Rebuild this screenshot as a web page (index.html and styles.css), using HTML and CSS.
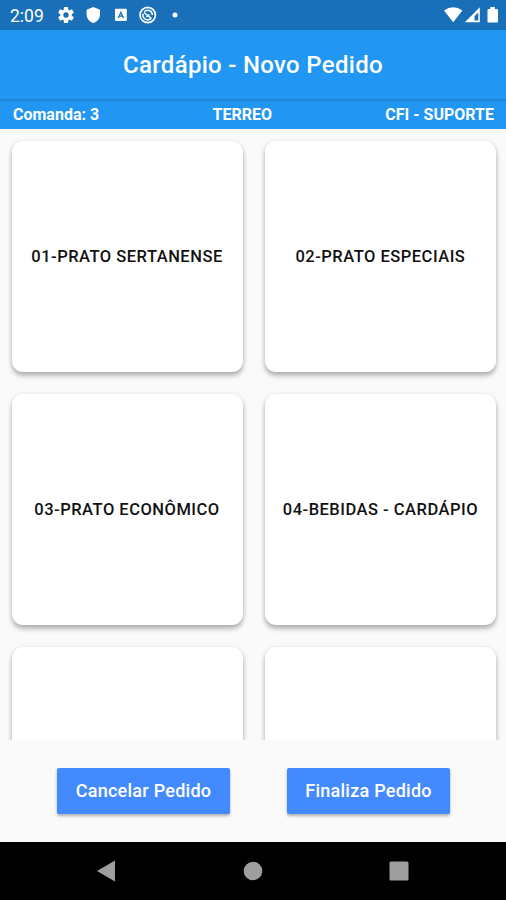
FILE: index.html
```html
<!DOCTYPE html>
<html lang="pt-BR">
<head>
  <meta charset="UTF-8">
  <meta name="viewport" content="width=device-width, initial-scale=1.0">
  <title>Cardápio - Novo Pedido</title>
  <link rel="stylesheet" href="styles.css">
</head>
<body>
  <div class="status-bar">
    <span class="clock">2:09</span>
    <svg class="notifications" width="130" height="20" viewBox="0 0 130 20" fill="#fff">
      <!-- gear -->
      <g transform="translate(10 10)">
        <rect x="-2.2" y="-8" width="4.4" height="16" rx="0.8"/>
        <rect x="-2.2" y="-8" width="4.4" height="16" rx="0.8" transform="rotate(60)"/>
        <rect x="-2.2" y="-8" width="4.4" height="16" rx="0.8" transform="rotate(120)"/>
        <circle r="5.8"/>
        <circle r="2.7" fill="#1a70b8"/>
      </g>
      <!-- shield -->
      <path d="M37.300 2 L44 4.700 V9.500 C44 13.500 41.300 16.700 37.300 18 C33.300 16.700 30.600 13.500 30.600 9.500 V4.700 Z"/>
      <!-- keyboard -->
      <rect x="59" y="3.700" width="11.800" height="12.400" rx="1"/>
      <path d="M62.300 13 L64.900 7.300 L67.500 13 M63.200 11.200 H66.600" fill="none" stroke="#1a70b8" stroke-width="1.300"/>
      <!-- sync circle -->
      <g fill="none" stroke="#fff">
        <circle cx="91.700" cy="10" r="7.700" stroke-width="1.700"/>
        <path d="M88.300 6.700 A4.700 4.700 0 0 1 96.400 10 M95 13.400 A4.700 4.700 0 0 1 87.200 8.700" stroke-width="1.500"/>
        <path d="M88 7.500 L95.500 13.500 M90.300 11.800 L93.500 9.500" stroke-width="1.500"/>
      </g>
      <circle cx="119" cy="10" r="2.500"/>
    </svg>
    <svg class="signals" width="58" height="20" viewBox="0 0 58 20" fill="#fff">
      <path d="M1 5.500 Q10.200 -1.200 19.400 5.500 L10.200 17.200 Z"/>
      <!-- mobile signal, right part hollow -->
      <path d="M36.800 2.200 V17.200 H21.800 Z"/>
      <path d="M35.300 7.500 V15.500 H31.500 V11.300 Z" fill="#1a70b8"/>
      <path d="M45 4 H47.200 V2 H51.800 V4 H54 Q55 4 55 5 V16.500 Q55 17.500 54 17.500 H45.500 Q44.500 17.500 44.500 16.500 V5 Z"/>
    </svg>
  </div>

  <header class="app-bar">
    <h1>Cardápio - Novo Pedido</h1>
  </header>

  <div class="order-info">
    <span>Comanda: 3</span>
    <span>TERREO</span>
    <span>CFI - SUPORTE</span>
  </div>

  <main class="menu">
    <div class="card">01-PRATO SERTANENSE</div>
    <div class="card">02-PRATO ESPECIAIS</div>
    <div class="card">03-PRATO ECONÔMICO</div>
    <div class="card">04-BEBIDAS - CARDÁPIO</div>
    <div class="card"></div>
    <div class="card"></div>
  </main>

  <footer class="actions">
    <button class="cancel">Cancelar Pedido</button>
    <button class="finish">Finaliza Pedido</button>
  </footer>

  <nav class="nav-bar">
    <svg width="20" height="22" viewBox="0 0 20 22"><path d="M1 11 L19 0.500 V21.500 Z" fill="#9e9e9e"/></svg>
    <svg width="20" height="20" viewBox="0 0 20 20"><circle cx="10" cy="10" r="9.300" fill="#9e9e9e"/></svg>
    <svg width="20" height="20" viewBox="0 0 20 20"><rect x="0.500" y="0.500" width="19" height="19" rx="1.500" fill="#9e9e9e"/></svg>
  </nav>
</body>
</html>
```

FILE: styles.css
```css
* {
  box-sizing: border-box;
}

body {
  display: flex;
  flex-direction: column;
  height: 100vh;
  margin: 0;
  overflow: hidden;
  background: #fafafa;
  font-family: Roboto, sans-serif;
}

.status-bar {
  display: flex;
  align-items: center;
  flex: 0 0 30px;
  padding: 0 5px 0 10px;
  background: #1a70b8;
  color: white;
}

.clock {
  width: 46px;
  font-size: 17.5px;
  line-height: 28px;
  padding-top: 2px;
}

.signals {
  margin-left: auto;
}

.app-bar {
  display: flex;
  align-items: center;
  justify-content: center;
  flex: 0 0 69px;
  padding-top: 1px;
  background: #2196f3;
  color: white;
}

.app-bar h1 {
  margin: 0;
  font-size: 24px;
  font-weight: 500;
  letter-spacing: 0.3px;
}

.order-info {
  display: flex;
  justify-content: space-between;
  align-items: center;
  flex: 0 0 30px;
  padding: 0 12px 0 13px;
  background: linear-gradient(#1c83d6, #2196f3 4px);
  color: white;
  font-size: 16px;
  font-weight: 700;
}

.menu {
  display: grid;
  grid-template-columns: repeat(2, 231px);
  grid-auto-rows: 231px;
  gap: 22.4px;
  flex: 0 0 611px;
  padding: 11.5px;
  overflow: hidden;
}

.card {
  display: flex;
  align-items: center;
  justify-content: center;
  border-radius: 11px;
  background: white;
  color: #111;
  font-size: 16.5px;
  font-weight: 500;
  letter-spacing: 0.5px;
  white-space: nowrap;
  box-shadow: 0 4px 5px rgba(0, 0, 0, 0.24), 0 1px 5px rgba(0, 0, 0, 0.12);
}

.actions {
  display: flex;
  flex: 0 0 102px;
  gap: 57px;
  padding: 28px 0 0 57px;
}

.actions button {
  height: 46px;
  padding: 0 0 2px;
  border: none;
  border-radius: 2px;
  background: #448aff;
  color: white;
  font-family: inherit;
  font-size: 18px;
  font-weight: 500;
  letter-spacing: 0.25px;
  box-shadow: 0 2px 3px rgba(0, 0, 0, 0.3);
}

.actions .cancel {
  width: 173px;
}

.actions .finish {
  width: 163px;
}

.nav-bar {
  display: flex;
  align-items: center;
  justify-content: space-between;
  flex: 0 0 58px;
  padding: 0 97px 0 96px;
  background: black;
}
```
